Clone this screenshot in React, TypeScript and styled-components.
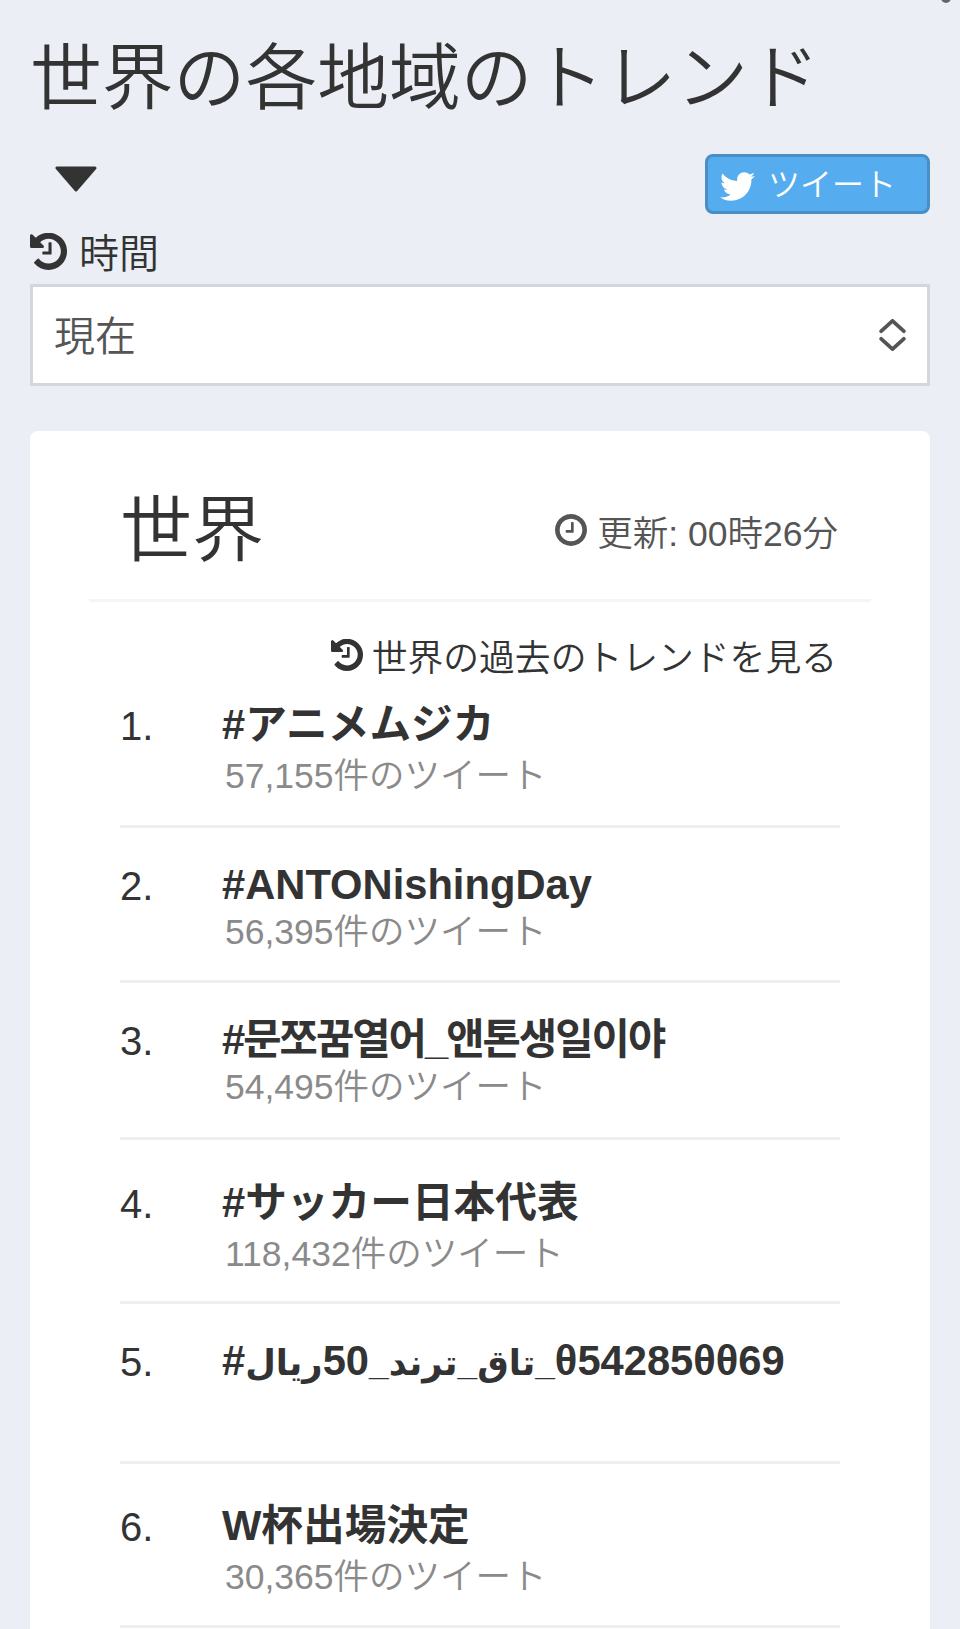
import React from "react";
import styled, { createGlobalStyle } from "styled-components";
import { FaTwitter } from "react-icons/fa";

const Global = createGlobalStyle`
  html, body { margin: 0; padding: 0; background: #ebeff5; }
  body { font-family: "Liberation Sans", "Noto Sans CJK JP", sans-serif; color: #333; }
`;

const Page = styled.div`
  position: relative;
  height: 1629px;
  overflow: hidden;
  padding: 0 30px;
  box-sizing: border-box;
`;
const TopDot = styled.span`
  position: absolute;
  top: -7px;
  left: 941px;
  width: 10px;
  height: 10px;
  border-radius: 50%;
  background: #666;
`;
const Title = styled.h1`
  margin: 0;
  padding: 28px 0 0 0;
  font-size: 71.8px;
  line-height: 100px;
  font-weight: 350;
  color: #333;
`;
const Toolbar = styled.div`
  display: flex;
  justify-content: space-between;
  align-items: flex-start;
  margin-top: 26px;
  height: 60px;
`;
const Caret = styled.svg`
  display: block;
  width: 44px;
  height: 26px;
  margin: 12px 0 0 24px;
`;
const TweetButton = styled.button`
  display: flex;
  align-items: center;
  box-sizing: border-box;
  width: 225px;
  height: 60px;
  padding: 0 0 4px 12px;
  border: 3px solid #4a8ec6;
  border-radius: 8px;
  background: #55acee;
  color: #fff;
  font-family: inherit;
  font-size: 32px;
  font-weight: 350;
  svg { width: 35px; height: 35px; margin: 8px 13px 0 0; }
`;
const FaIcon = styled.svg<{ $size: number; $gap: number }>`
  display: block;
  flex: none;
  width: ${(p) => p.$size}px;
  height: ${(p) => p.$size}px;
  margin-right: ${(p) => p.$gap}px;
`;
const FieldLabel = styled.label`
  display: flex;
  align-items: center;
  height: 40px;
  margin-top: 17px;
  font-size: 40px;
  font-weight: 350;
  color: #333;
`;
const SelectBox = styled.div`
  display: flex;
  align-items: center;
  justify-content: space-between;
  box-sizing: border-box;
  height: 102px;
  margin-top: 13px;
  padding: 0 20px 4px 21px;
  border: 3px solid #d3d6dc;
  background: #fff;
  color: #555;
  font-size: 41px;
  font-weight: 350;
`;
const UpDown = styled.svg`
  display: block;
  width: 29px;
  height: 32px;
  margin-top: 4px;
`;
const Card = styled.section`
  margin-top: 45px;
  background: #fff;
  border-radius: 8px;
  height: 1300px;
`;
const CardHead = styled.header`
  display: flex;
  align-items: center;
  justify-content: space-between;
  box-sizing: border-box;
  height: 171px;
  margin: 0 59px;
  padding: 30px 33px 0 31px;
  border-bottom: 3px solid #f4f5f6;
`;
const Region = styled.h2`
  margin: 0;
  font-size: 72px;
  line-height: 90px;
  font-weight: 350;
  color: #333;
`;
const Updated = styled.div`
  display: flex;
  align-items: center;
  font-size: 35.5px;
  font-weight: 350;
  color: #555;
`;
const List = styled.div`
  padding: 0 90px;
`;
const PastLink = styled.a`
  display: flex;
  justify-content: flex-end;
  align-items: center;
  height: 40px;
  margin-top: 33px;
  padding-right: 3px;
  font-size: 35.8px;
  font-weight: 350;
  color: #333;
`;
const Row = styled.div<{ $top: number; $height: number }>`
  display: grid;
  grid-template-columns: 102px 1fr;
  box-sizing: border-box;
  height: ${(p) => p.$height}px;
  padding-top: ${(p) => p.$top}px;
  border-bottom: 3px solid #eeeeef;
`;
const Rank = styled.div`
  margin-top: 1px;
  font-size: 40px;
  line-height: 46px;
  font-weight: 400;
  color: #333;
`;
const Topic = styled.div`
  font-size: 41.7px;
  line-height: 46px;
  font-weight: 700;
  color: #333;
  white-space: nowrap;
`;
const Korean = styled.span`
  font-family: "Liberation Sans", "Noto Sans CJK KR", sans-serif;
  letter-spacing: -2px;
`;
const Rtl = styled.span`
  direction: rtl;
  unicode-bidi: isolate;
  display: inline-block;
  font-family: "Liberation Sans", "DejaVu Sans", sans-serif;
`;
const Arabic = styled.span`
  font-size: 35.3px;
`;
const Count = styled.div<{ $gap: number }>`
  margin: ${(p) => p.$gap}px 0 0 3px;
  font-size: 35.5px;
  line-height: 46px;
  font-weight: 350;
  color: #8a8a8a;
`;

const historyPath =
  "M1664 896q0 156-61 298t-164 245-245 164-298 61q-172 0-327-72.5t-264-204.5q-9-13-8.5-29.5t11.5-26.5l137-138q10-9 25-9 16 2 23 12 73 95 179 147t225 52q104 0 198.5-40.5t163.5-109.5 109.5-163.5 40.5-198.5-40.5-198.5-109.5-163.5-163.5-109.5-198.5-40.5q-98 0-188 35.5t-160 101.5l137 138q31 30 14 69-17 40-59 40h-448q-26 0-45-19t-19-45v-448q0-42 40-59 39-17 69 14l130 129q107-101 244.5-156.5t284.5-55.5q156 0 298 61t245 164 164 245 61 298zM1024 544v448q0 14-9 23t-23 9h-320q-14 0-23-9t-9-23v-64q0-14 9-23t23-9h224v-352q0-14 9-23t23-9h64q14 0 23 9t9 23z";
const clockPath =
  "M1024 544v448q0 14-9 23t-23 9h-320q-14 0-23-9t-9-23v-64q0-14 9-23t23-9h224v-352q0-14 9-23t23-9h64q14 0 23 9t9 23zm416 352q0-148-73-273t-198-198-273-73-273 73-198 198-73 273 73 273 198 198 273 73 273-73 198-198 73-273zm224 0q0 209-103 385.5t-279.5 279.5-385.5 103-385.5-103-279.5-279.5-103-385.5 103-385.5 279.5-279.5 385.5-103 385.5 103 279.5 279.5 103 385.5z";

const rows = [
  { top: 27, height: 153, gap: 5, n: "1.", t: <>#アニメムジカ</>, c: "57,155件のツイート" },
  { top: 34, height: 155, gap: 1, n: "2.", t: <>#ANTONishingDay</>, c: "56,395件のツイート" },
  { top: 34, height: 157, gap: 1, n: "3.", t: <Korean>#문쪼꿈열어_앤톤생일이야</Korean>, c: "54,495件のツイート" },
  { top: 40, height: 164, gap: 5, n: "4.", t: <>#サッカー日本代表</>, c: "118,432件のツイート" },
  {
    top: 34,
    height: 160,
    gap: 0,
    n: "5.",
    t: (
      <>
        #
        <Rtl>
          θ54285θθ69<Arabic>_تاق_ترند_</Arabic>50<Arabic>ريال</Arabic>
        </Rtl>
      </>
    ),
    c: "",
  },
  { top: 39, height: 164, gap: 5, n: "6.", t: <>W杯出場決定</>, c: "30,365件のツイート" },
];

export default function App() {
  return (
    <Page>
      <Global />
      <TopDot />
      <Title>世界の各地域のトレンド</Title>
      <Toolbar>
        <Caret viewBox="0 0 44 26"><path d="M3 2h38l-19 22z" fill="#333" stroke="#333" strokeWidth="3" strokeLinejoin="round" /></Caret>
        <TweetButton><FaTwitter />ツイート</TweetButton>
      </Toolbar>
      <FieldLabel>
        <FaIcon $size={37} $gap={12} viewBox="128 128 1536 1536" fill="#333"><path d={historyPath} /></FaIcon>
        時間
      </FieldLabel>
      <SelectBox>
        現在
        <UpDown viewBox="0 0 30 34" fill="none" stroke="#555" strokeWidth="4" strokeLinecap="round" strokeLinejoin="round">
          <path d="M3 13 15 2l12 11M3 21l12 11 12-11" />
        </UpDown>
      </SelectBox>
      <Card>
        <CardHead>
          <Region>世界</Region>
          <Updated>
            <FaIcon $size={32} $gap={10} viewBox="128 128 1536 1536" fill="#555"><path d={clockPath} /></FaIcon>
            更新: 00時26分
          </Updated>
        </CardHead>
        <List>
          <PastLink>
            <FaIcon $size={32} $gap={9} viewBox="128 128 1536 1536" fill="#333"><path d={historyPath} /></FaIcon>
            世界の過去のトレンドを見る
          </PastLink>
          {rows.map((r) => (
            <Row key={r.n} $top={r.top} $height={r.height}>
              <Rank>{r.n}</Rank>
              <div>
                <Topic>{r.t}</Topic>
                {r.c && <Count $gap={r.gap}>{r.c}</Count>}
              </div>
            </Row>
          ))}
        </List>
      </Card>
    </Page>
  );
}
